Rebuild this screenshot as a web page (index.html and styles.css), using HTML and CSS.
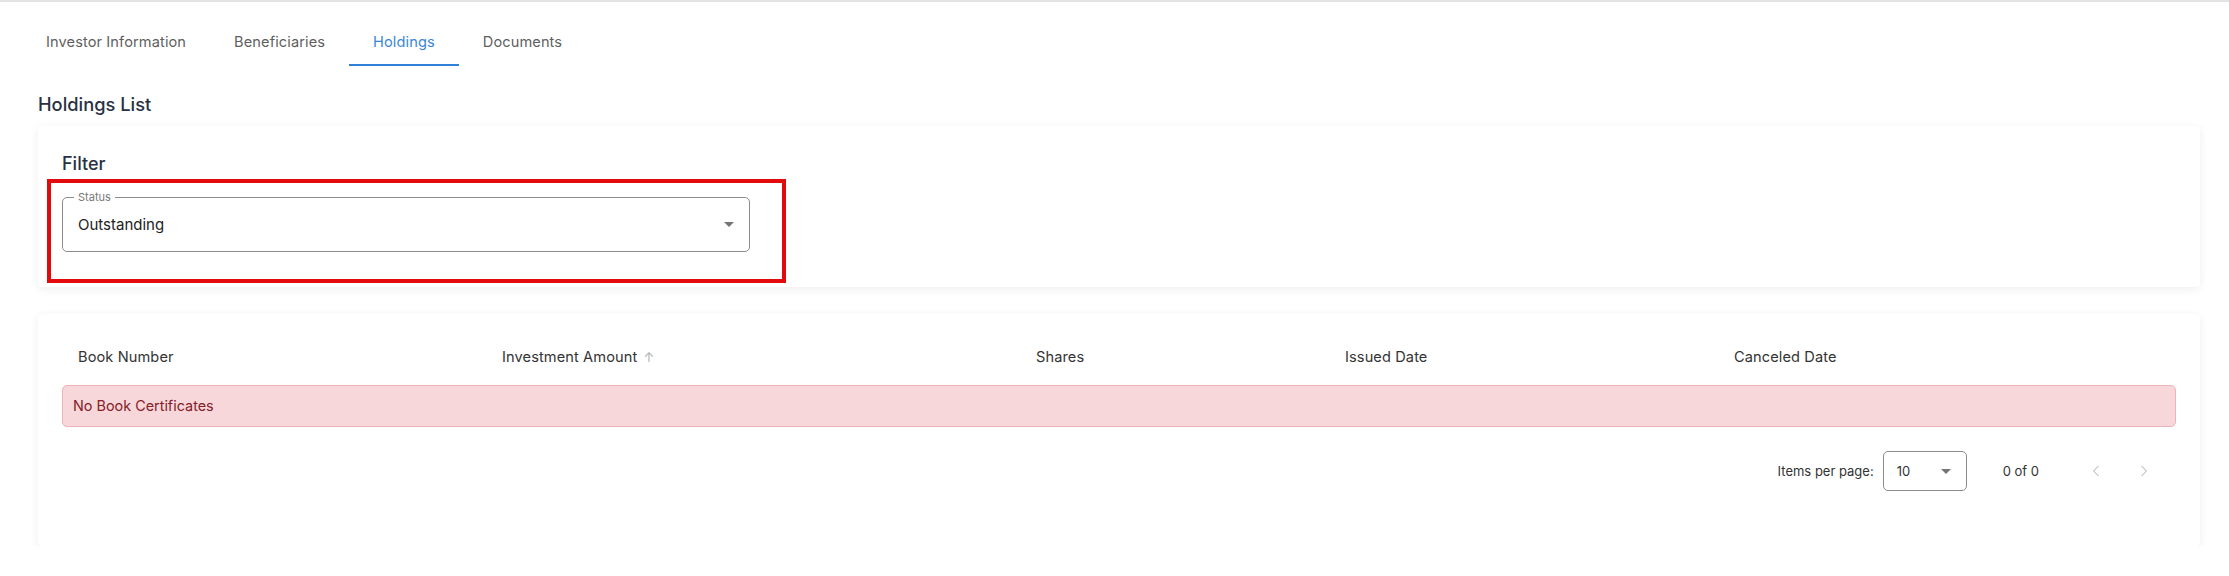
FILE: index.html
```html
<!DOCTYPE html>
<html lang="en">
<head>
    <meta charset="UTF-8">
    <meta name="viewport" content="width=device-width, initial-scale=1.0">
    <title>Holdings</title>
    <link rel="stylesheet" href="styles.css">
</head>
<body>
    <div class="topline"></div>
    <nav class="tabs">
        <a class="tab">Investor Information</a>
        <a class="tab">Beneficiaries</a>
        <a class="tab active">Holdings</a>
        <a class="tab">Documents</a>
    </nav>
    <main class="content">
        <h2 class="section-title">Holdings List</h2>

        <section class="card filter-card">
            <h3 class="card-title">Filter</h3>
            <div class="highlight">
                <fieldset class="outline-field">
                    <legend>Status</legend>
                    <div class="field-value">
                        <span>Outstanding</span>
                        <span class="caret"></span>
                    </div>
                </fieldset>
            </div>
        </section>

        <section class="card table-card">
            <div class="table-head">
                <div class="th">Book Number</div>
                <div class="th">Investment Amount <span class="sort">&#8593;</span></div>
                <div class="th">Shares</div>
                <div class="th">Issued Date</div>
                <div class="th">Canceled Date</div>
            </div>
            <div class="alert">No Book Certificates</div>
            <div class="paginator">
                <span class="page-label">Items per page:</span>
                <div class="page-size">
                    <span>10</span>
                    <span class="caret"></span>
                </div>
                <span class="range">0 of 0</span>
                <button class="nav-btn" disabled>
                    <svg width="24" height="24" viewBox="0 0 24 24"><path d="M14.5 7l-5 5 5 5" fill="none" stroke="currentColor" stroke-width="1.3"/></svg>
                </button>
                <button class="nav-btn" disabled>
                    <svg width="24" height="24" viewBox="0 0 24 24"><path d="M9.5 7l5 5-5 5" fill="none" stroke="currentColor" stroke-width="1.3"/></svg>
                </button>
            </div>
        </section>
    </main>
</body>
</html>
```

FILE: styles.css
```css
* {
    margin: 0;
    padding: 0;
    box-sizing: border-box;
}
body {
    font-family: "Inter", "Noto Sans", sans-serif;
    font-size: 14px;
    color: #333;
    background-color: #fff;
}
.topline {
    height: 2px;
    background-color: #e4e4e4;
}

/* tabs */
.tabs {
    display: flex;
    height: 48px;
    margin-top: 16px;
    padding-left: 22px;
}
.tab {
    padding: 0 24px;
    line-height: 48px;
    font-size: 14.6px;
    letter-spacing: 0.1px;
    color: #5f5f5f;
    cursor: pointer;
}
.tab.active {
    color: #3a86d6;
    box-shadow: inset 0 -2px 0 #2f80d6;
}

.content {
    padding: 0 29px 0 38px;
}
.section-title {
    margin-top: 25px;
    font-size: 18.3px;
    line-height: 27px;
    font-weight: 500;
    color: #283142;
}

.card {
    background-color: #fff;
    border-radius: 4px;
    box-shadow: 0 2px 10px rgba(0,0,0,0.07);
}
.filter-card {
    margin-top: 8px;
    padding: 24px 24px 4px;
}
.card-title {
    font-size: 18px;
    line-height: 27px;
    font-weight: 500;
    color: #283142;
    margin-bottom: 2px;
}

/* red outline around the field */
.highlight {
    width: 739px;
    margin-left: -15px;
    padding: 7px 32px 27px 11px;
    border: 4px solid #e20a0a;
}
.outline-field {
    border: 1px solid #8c8c8c;
    border-radius: 5px;
    padding: 0 15px 7px;
}
.outline-field legend {
    margin-left: -4px;
    padding: 0 4px;
    font-size: 11px;
    line-height: 14px;
    color: #777;
}
.field-value {
    display: flex;
    justify-content: space-between;
    align-items: center;
    height: 40px;
    font-size: 15px;
    color: #222;
}
.caret {
    width: 0;
    height: 0;
    border-left: 5px solid transparent;
    border-right: 5px solid transparent;
    border-top: 5px solid #757575;
}

/* table */
.table-card {
    margin-top: 27px;
    padding: 15px 24px 47px;
}
.table-head {
    display: grid;
    grid-template-columns: 424px 534px 309px 389px 1fr;
    height: 56px;
    align-items: center;
    font-size: 14.6px;
    letter-spacing: 0.1px;
}
.th {
    padding-left: 16px;
    color: #333;
}
.sort {
    color: #b0b0b0;
    font-size: 13px;
    margin-left: 2px;
}
.alert {
    height: 42px;
    line-height: 40px;
    padding: 0 10px;
    background-color: #f8d7da;
    border: 1px solid #ecb3b9;
    border-radius: 5px;
    font-size: 14.4px;
    color: #842029;
}

/* paginator */
.paginator {
    display: flex;
    justify-content: flex-end;
    align-items: center;
    height: 56px;
    margin-top: 16px;
    padding-right: 8px;
    font-size: 13px;
    color: #333;
}
.page-label {
    margin-right: 9px;
}
.page-size {
    display: flex;
    justify-content: space-between;
    align-items: center;
    width: 84px;
    height: 40px;
    padding: 0 15px 0 13px;
    border: 1px solid #8c8c8c;
    border-radius: 5px;
}
.range {
    margin: 0 33px 0 36px;
}
.nav-btn {
    display: flex;
    justify-content: center;
    align-items: center;
    width: 48px;
    height: 48px;
    border: none;
    background: none;
    color: #cfcfcf;
}
```
